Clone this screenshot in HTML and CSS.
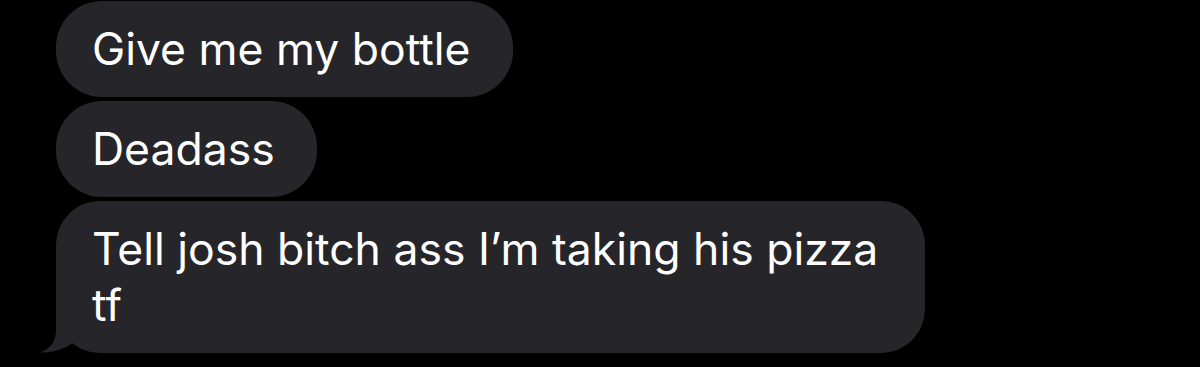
FILE: index.html
```html
<!DOCTYPE html>
<html>

<head>
  <title>Messages</title>
  <link rel="stylesheet" href="styles.css">
</head>

<body>
  <div class="thread">
    <div class="bubble">Give me my bottle</div>
    <div class="bubble">Deadass</div>
    <div class="bubble bubble-last">
      Tell josh bitch ass I’m taking his pizza tf
      <svg class="tail" width="40" height="48" viewBox="0 0 40 48">
        <path d="M16 0 L16 24 C16 36 12 43 0 47.5 C12 48 24 44 33 38 L40 30 L40 0 Z" fill="#262529" />
      </svg>
    </div>
  </div>
</body>

</html>
```

FILE: styles.css
```css
body {
  margin: 0;
  background-color: #000;
  font-family: Inter, "Noto Sans", sans-serif;
  height: 367px;
  overflow: hidden;
}

.thread {
  display: flex;
  flex-direction: column;
  align-items: flex-start;
  gap: 4px;
  padding: 1px 0 0 56px;
}

.bubble {
  position: relative;
  box-sizing: border-box;
  background-color: #262529;
  color: #fff;
  font-size: 44.5px;
  line-height: 56px;
  padding: 20px 42px 20px 36px;
  border-radius: 46px;
  max-width: 869px;
}

.bubble-last {
  border-radius: 44px;
}

.tail {
  position: absolute;
  left: -16px;
  bottom: 0;
}
```
